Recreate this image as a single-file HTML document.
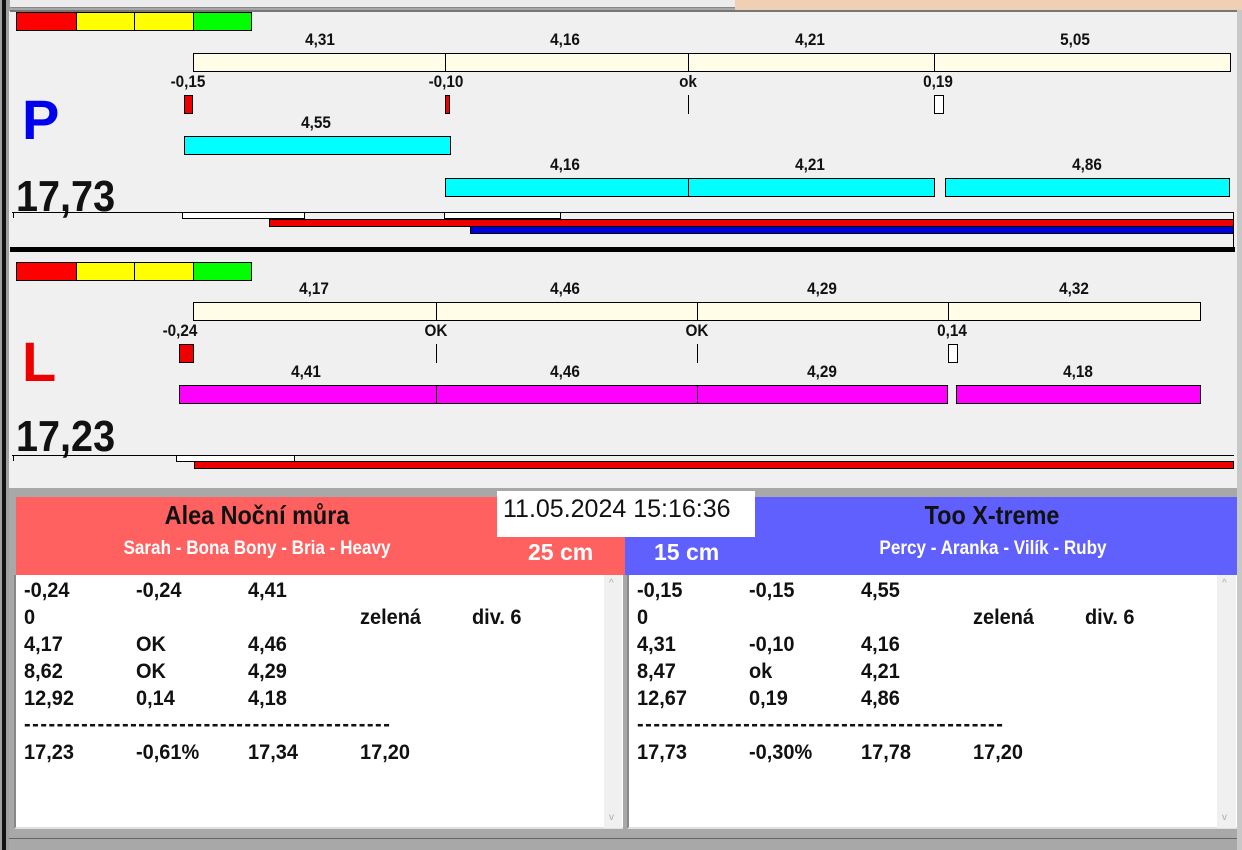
<!DOCTYPE html>
<html><head><meta charset="utf-8"><style>
*{margin:0;padding:0;box-sizing:border-box}
body{width:1242px;height:850px;position:relative;overflow:hidden;background:#f0f0f0;font-family:"Liberation Sans",Arial,sans-serif}
.a{position:absolute}
.b{position:absolute;border:1px solid #000}
.t{position:absolute;font-weight:bold;font-size:17px;color:#111;transform:translateX(-50%) scaleX(0.9);white-space:nowrap;line-height:16px}
.v{position:absolute;width:1px;background:#000}
.r{position:absolute;font-weight:bold;font-size:21px;line-height:22px;color:#111;white-space:nowrap;transform-origin:0 0;transform:scaleX(0.95)}
.big{position:absolute;font-size:44px;font-weight:bold;color:#111;line-height:46px;transform-origin:0 0;transform:scaleX(0.9)}
</style></head><body>
<div class="a" style="left:0;top:0;width:1242px;height:11px;background:#a8a8a8"></div>
<div class="a" style="left:10px;top:0;width:725px;height:8px;background:#ececec;border-bottom:1px solid #888"></div>
<div class="a" style="left:735px;top:0;width:507px;height:11px;background:#f0d0b4"></div>
<div class="a" style="left:0;top:0;width:9px;height:850px;background:#a0a0a0"></div>
<div class="a" style="left:2px;top:0;width:4px;height:850px;background:#111"></div>
<div class="a" style="left:10px;top:10px;width:1227px;height:478px;background:#f0f0f0;border-top:2px solid #777"></div>
<div class="a" style="left:1237px;top:10px;width:5px;height:840px;background:#c8c8c8"></div>

<div class="b" style="left:16px;top:12px;width:61px;height:19px;background:#f00"></div>
<div class="b" style="left:76px;top:12px;width:59px;height:19px;background:#ff0"></div>
<div class="b" style="left:134px;top:12px;width:60px;height:19px;background:#ff0"></div>
<div class="b" style="left:193px;top:12px;width:59px;height:19px;background:#0f0"></div>

<div class="t" style="left:320px;top:32px">4,31</div>
<div class="t" style="left:565px;top:32px">4,16</div>
<div class="t" style="left:810px;top:32px">4,21</div>
<div class="t" style="left:1075px;top:32px">5,05</div>
<div class="b" style="left:193px;top:53px;width:1038px;height:19px;background:#fffde8"></div>
<div class="v" style="left:445px;top:53px;height:19px"></div>
<div class="v" style="left:688px;top:53px;height:19px"></div>
<div class="v" style="left:934px;top:53px;height:19px"></div>
<div class="t" style="left:188px;top:74px">-0,15</div>
<div class="t" style="left:446px;top:74px">-0,10</div>
<div class="t" style="left:688px;top:74px">ok</div>
<div class="t" style="left:938px;top:74px">0,19</div>
<div class="b" style="left:184px;top:95px;width:9px;height:19px;background:#e00"></div>
<div class="b" style="left:445px;top:95px;width:5px;height:19px;background:#e00"></div>
<div class="v" style="left:688px;top:95px;height:19px"></div>
<div class="b" style="left:934px;top:95px;width:10px;height:19px;background:#fff"></div>
<div class="a" style="left:22px;top:90px;font-size:56px;font-weight:bold;color:#0000ee;line-height:60px">P</div>
<div class="t" style="left:316px;top:115px">4,55</div>
<div class="b" style="left:184px;top:136px;width:267px;height:19px;background:#0ff"></div>
<div class="t" style="left:565px;top:157px">4,16</div>
<div class="t" style="left:810px;top:157px">4,21</div>
<div class="t" style="left:1087px;top:157px">4,86</div>
<div class="b" style="left:445px;top:178px;width:490px;height:19px;background:#0ff"></div>
<div class="v" style="left:688px;top:178px;height:19px"></div>
<div class="b" style="left:945px;top:178px;width:285px;height:19px;background:#0ff"></div>
<div class="big" style="left:16px;top:174px">17,73</div>
<div class="a" style="left:12px;top:212px;width:1222px;height:1px;background:#000"></div>
<div class="v" style="left:13px;top:212px;height:6px"></div>
<div class="b" style="left:182px;top:212px;width:123px;height:7px;background:#fff"></div>
<div class="b" style="left:444px;top:212px;width:117px;height:7px;background:#fff"></div>
<div class="b" style="left:269px;top:219px;width:965px;height:8px;background:#e00"></div>
<div class="b" style="left:470px;top:226px;width:764px;height:8px;background:#0000dd"></div>
<div class="a" style="left:1233px;top:212px;width:1px;height:36px;background:#000"></div>
<div class="a" style="left:10px;top:247px;width:1225px;height:5px;background:#000"></div>

<div class="b" style="left:16px;top:262px;width:61px;height:19px;background:#f00"></div>
<div class="b" style="left:76px;top:262px;width:59px;height:19px;background:#ff0"></div>
<div class="b" style="left:134px;top:262px;width:60px;height:19px;background:#ff0"></div>
<div class="b" style="left:193px;top:262px;width:59px;height:19px;background:#0f0"></div>
<div class="t" style="left:314px;top:281px">4,17</div>
<div class="t" style="left:565px;top:281px">4,46</div>
<div class="t" style="left:822px;top:281px">4,29</div>
<div class="t" style="left:1074px;top:281px">4,32</div>
<div class="b" style="left:193px;top:302px;width:1008px;height:19px;background:#fffde8"></div>
<div class="v" style="left:436px;top:302px;height:19px"></div>
<div class="v" style="left:697px;top:302px;height:19px"></div>
<div class="v" style="left:948px;top:302px;height:19px"></div>
<div class="t" style="left:180px;top:323px">-0,24</div>
<div class="t" style="left:436px;top:323px">OK</div>
<div class="t" style="left:697px;top:323px">OK</div>
<div class="t" style="left:952px;top:323px">0,14</div>
<div class="b" style="left:179px;top:344px;width:15px;height:19px;background:#e00"></div>
<div class="v" style="left:436px;top:344px;height:19px"></div>
<div class="v" style="left:697px;top:344px;height:19px"></div>
<div class="b" style="left:948px;top:344px;width:10px;height:19px;background:#fff"></div>
<div class="a" style="left:22px;top:332px;font-size:56px;font-weight:bold;color:#ee0000;line-height:60px">L</div>
<div class="t" style="left:306px;top:364px">4,41</div>
<div class="t" style="left:565px;top:364px">4,46</div>
<div class="t" style="left:822px;top:364px">4,29</div>
<div class="t" style="left:1078px;top:364px">4,18</div>
<div class="b" style="left:179px;top:385px;width:769px;height:19px;background:#f0f"></div>
<div class="v" style="left:436px;top:385px;height:19px"></div>
<div class="v" style="left:697px;top:385px;height:19px"></div>
<div class="b" style="left:956px;top:385px;width:245px;height:19px;background:#f0f"></div>
<div class="big" style="left:16px;top:414px">17,23</div>
<div class="a" style="left:12px;top:455px;width:1222px;height:1px;background:#000"></div>
<div class="v" style="left:13px;top:455px;height:6px"></div>
<div class="b" style="left:176px;top:455px;width:119px;height:7px;background:#fff"></div>
<div class="b" style="left:194px;top:461px;width:1040px;height:8px;background:#e00"></div>

<div class="a" style="left:9px;top:488px;width:1228px;height:362px;background:#a8a8a8"></div>
<div class="a" style="left:16px;top:497px;width:609px;height:78px;background:#ff6060"></div>
<div class="a" style="left:625px;top:497px;width:612px;height:78px;background:#6060ff"></div>
<div class="a" style="left:497px;top:491px;width:258px;height:46px;background:#fff"></div>
<div class="a" style="left:497px;top:537px;width:128px;height:38px;background:#ff6060"></div>
<div class="a" style="left:503px;top:494px;font-size:25px;color:#111;line-height:30px">11.05.2024 15:16:36</div>
<div class="t" style="left:257px;top:501px;font-size:26px;line-height:28px">Alea Noční můra</div>
<div class="t" style="left:257px;top:539px;font-size:19px;line-height:20px;color:#fff">Sarah - Bona Bony - Bria - Heavy</div>
<div class="a" style="left:528px;top:539px;font-size:23px;font-weight:bold;color:#fff;line-height:26px">25 cm</div>
<div class="a" style="left:654px;top:539px;font-size:23px;font-weight:bold;color:#fff;line-height:26px">15 cm</div>
<div class="t" style="left:992px;top:501px;font-size:26px;line-height:28px">Too X-treme</div>
<div class="t" style="left:993px;top:539px;font-size:19px;line-height:20px;color:#fff">Percy - Aranka - Vilík - Ruby</div>

<div class="a" style="left:14px;top:575px;width:609px;height:254px;background:#fff;border-left:2px solid #888;border-bottom:2px solid #e0e0e0"></div>
<div class="a" style="left:604px;top:575px;width:18px;height:253px;background:#f0f0f0"></div>
<div class="a" style="left:627px;top:575px;width:610px;height:254px;background:#fff;border-left:2px solid #888;border-bottom:2px solid #e0e0e0"></div>
<div class="a" style="left:1217px;top:575px;width:19px;height:253px;background:#f0f0f0"></div>
<div class="a" style="left:609px;top:578px;font-size:10px;color:#aaa">^</div>
<div class="a" style="left:609px;top:812px;font-size:10px;color:#aaa">v</div>
<div class="a" style="left:1222px;top:578px;font-size:10px;color:#aaa">^</div>
<div class="a" style="left:1222px;top:812px;font-size:10px;color:#aaa">v</div>
<div class="a" style="left:9px;top:838px;width:1228px;height:1px;background:#666"></div>

<div class="r" style="left:24px;top:580px">-0,24</div><div class="r" style="left:136px;top:580px">-0,24</div><div class="r" style="left:248px;top:580px">4,41</div>
<div class="r" style="left:24px;top:607px">0</div><div class="r" style="left:360px;top:607px">zelená</div><div class="r" style="left:472px;top:607px">div. 6</div>
<div class="r" style="left:24px;top:634px">4,17</div><div class="r" style="left:136px;top:634px">OK</div><div class="r" style="left:248px;top:634px">4,46</div>
<div class="r" style="left:24px;top:661px">8,62</div><div class="r" style="left:136px;top:661px">OK</div><div class="r" style="left:248px;top:661px">4,29</div>
<div class="r" style="left:24px;top:688px">12,92</div><div class="r" style="left:136px;top:688px">0,14</div><div class="r" style="left:248px;top:688px">4,18</div>
<div class="r" style="left:24px;top:714px;letter-spacing:1.6px">---------------------------------------------</div>
<div class="r" style="left:24px;top:742px">17,23</div><div class="r" style="left:136px;top:742px">-0,61%</div><div class="r" style="left:248px;top:742px">17,34</div><div class="r" style="left:360px;top:742px">17,20</div>

<div class="r" style="left:637px;top:580px">-0,15</div><div class="r" style="left:749px;top:580px">-0,15</div><div class="r" style="left:861px;top:580px">4,55</div>
<div class="r" style="left:637px;top:607px">0</div><div class="r" style="left:973px;top:607px">zelená</div><div class="r" style="left:1085px;top:607px">div. 6</div>
<div class="r" style="left:637px;top:634px">4,31</div><div class="r" style="left:749px;top:634px">-0,10</div><div class="r" style="left:861px;top:634px">4,16</div>
<div class="r" style="left:637px;top:661px">8,47</div><div class="r" style="left:749px;top:661px">ok</div><div class="r" style="left:861px;top:661px">4,21</div>
<div class="r" style="left:637px;top:688px">12,67</div><div class="r" style="left:749px;top:688px">0,19</div><div class="r" style="left:861px;top:688px">4,86</div>
<div class="r" style="left:637px;top:714px;letter-spacing:1.6px">---------------------------------------------</div>
<div class="r" style="left:637px;top:742px">17,73</div><div class="r" style="left:749px;top:742px">-0,30%</div><div class="r" style="left:861px;top:742px">17,78</div><div class="r" style="left:973px;top:742px">17,20</div>
</body></html>
